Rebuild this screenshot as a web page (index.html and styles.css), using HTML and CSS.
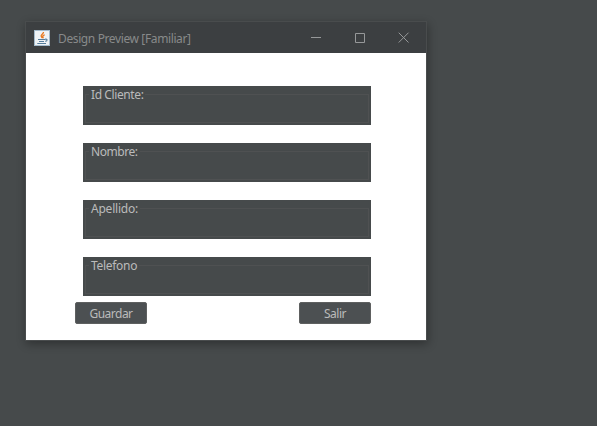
FILE: index.html
```html
<!DOCTYPE html>
<html lang="es">
<head>
<meta charset="utf-8">
<title>Design Preview [Familiar]</title>
<link rel="stylesheet" href="styles.css">
</head>
<body>
<main class="window">
  <header class="titlebar">
    <svg class="app-icon" width="16" height="16" viewBox="0 0 16 16">
      <rect x=".5" y=".5" width="15" height="15" fill="#eef2f5" stroke="#a3bacb"/>
      <path d="M9.500 2c.3 2-3.200 2.500-2.300 4.300.3.700 1 1.100 1 1.900M10.700 4.800C9 5.300 8.500 6 9 6.900c.3.500.1 1-.3 1.400" fill="none" stroke="#e8761c" stroke-width="1.300"/>
      <path d="M4 9.500h7M5 11.500h5M3.300 13.500h8.700M11 9.200c2.800-.5 2.600 1.700.3 2.200" fill="none" stroke="#557d9c" stroke-width="1.100"/>
    </svg>
    <h1 class="title"><span>Design Preview [Familiar]</span></h1>
    <nav class="controls">
      <svg width="44" height="31" viewBox="0 0 44 31"><path d="M17 15.500h10"/></svg>
      <svg width="44" height="31" viewBox="0 0 44 31"><path d="M17.500 11.500h9v9h-9z"/></svg>
      <svg width="44" height="31" viewBox="0 0 44 31"><path d="M16.700 10.700l9.800 9.800M26.500 10.700l-9.800 9.800"/></svg>
    </nav>
  </header>
  <form class="form">
    <section class="field"><div class="outline"><label class="legend client">Id Cliente:</label></div></section>
    <section class="field"><div class="outline"><label class="legend name">Nombre:</label></div></section>
    <section class="field"><div class="outline"><label class="legend surname">Apellido:</label></div></section>
    <section class="field"><div class="outline"><label class="legend phone">Telefono</label></div></section>
    <div class="actions">
      <button type="button">Guardar</button>
      <button type="button">Salir</button>
    </div>
  </form>
</main>
</body>
</html>
```
FILE: styles.css
```css
* { box-sizing: border-box; }
body {
  margin: 0;
  height: 426px;
  padding: 22px 0 0 26px;
  overflow: hidden;
  background: #464a4b;
  font: 12px/16px "Noto Sans", "Open Sans", sans-serif;
}
.window {
  width: 400px;
  height: 318px;
  background: #fff;
  box-shadow: 0 0 0 1px #494c4d, 1px 3px 9px 1px rgba(0, 0, 0, .33);
}
.titlebar {
  display: flex;
  align-items: center;
  height: 31px;
  padding-left: 8px;
  background: #3c3f41;
}
.title {
  margin: 2px 0 0 8px;
  color: #888a8a;
  font-size: 12px;
  font-weight: 400;
  letter-spacing: -.38px;
  white-space: nowrap;
}
.controls { display: flex; margin-left: auto; }
.controls path { fill: none; stroke: #969899; stroke-width: 1; }
.form { padding: 33px 55px 0 57px; }
.field {
  width: 288px;
  height: 39px;
  margin-bottom: 18px;
  padding: 8px 2px 2px;
  background: #464a4b;
}
.field:nth-of-type(4) { margin-bottom: 6px; }
.outline {
  height: 29px;
  padding-left: 3px;
  border: 1px solid #4f5152;
}
.legend {
  display: block;
  width: max-content;
  margin-top: -8px;
  padding: 0 2px;
  background: #464a4b;
  color: #bbb;
  letter-spacing: -.4px;
}
.name { letter-spacing: -.45px; }
.surname { letter-spacing: -.22px; }
.phone { letter-spacing: -.3px; }
.actions {
  display: flex;
  justify-content: space-between;
  width: 296px;
  margin-left: -8px;
}
button {
  width: 72px;
  height: 22px;
  padding: 1px 0 0;
  border: 1px solid #5e6060;
  border-radius: 2px;
  background: #4c5052;
  color: #bbb;
  font: inherit;
  letter-spacing: -.5px;
}
```
